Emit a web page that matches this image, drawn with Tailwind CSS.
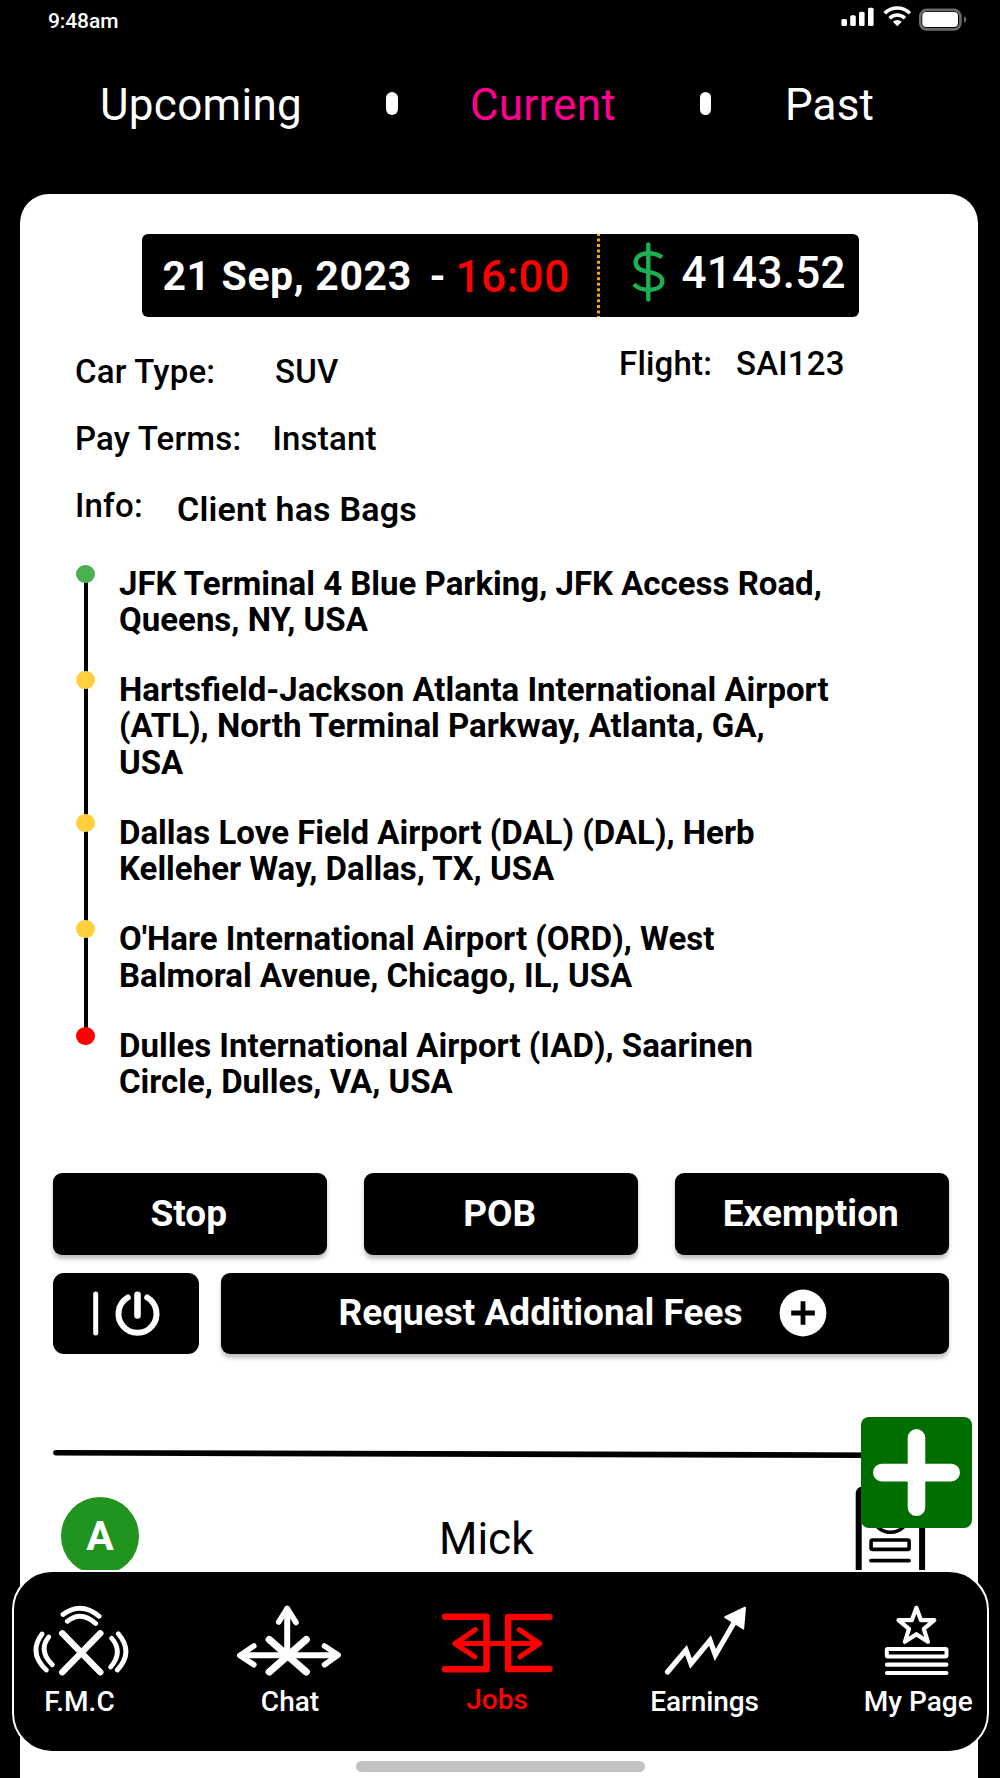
<!DOCTYPE html>
<html lang="en">
<head>
<meta charset="utf-8">
<title>Jobs</title>
<script src="https://cdn.jsdelivr.net/npm/@tailwindcss/browser@4"></script>
</head>
<body class="relative flex h-[1778px] w-[1000px] flex-col overflow-hidden bg-black font-['Roboto',sans-serif] whitespace-nowrap">

<!-- Status bar -->
<header class="flex h-[40px] shrink-0 justify-between pl-[48px] text-white">
  <span class="mt-[9px] text-[21px] leading-[24px] font-medium tracking-[-0.1px]">9:48am</span>
  <svg class="mr-[20px] h-[40px] w-[150px]" viewBox="830 0 150 40" fill="none">
    <g fill="#fff">
      <rect x="841.4" y="19" width="5.6" height="7" rx="1.5"/>
      <rect x="850.2" y="15.3" width="5.6" height="10.7" rx="1.5"/>
      <rect x="859" y="11.7" width="5.6" height="14.3" rx="1.5"/>
      <rect x="868" y="7.7" width="5.6" height="18.3" rx="1.5"/>
      <path d="M892.8 21.8Q897.3 18 901.8 21.8L897.3 26.3Z"/>
      <rect x="922.3" y="12" width="35.7" height="15" rx="4"/>
    </g>
    <path d="M884.7 13.3A17.5 17.5 0 0 1 909.9 13.3M889.7 18.3A10.6 10.6 0 0 1 904.9 18.3" stroke="#fff" stroke-width="3.5"/>
    <rect x="920.2" y="9.9" width="40.2" height="19.5" rx="6.5" stroke="#6b6b6b" stroke-width="2.6"/>
    <path d="M964 16.2C967 17.5 967 21.5 964 22.8Z" fill="#6b6b6b"/>
  </svg>
</header>

<!-- Tabs -->
<nav class="flex h-[154px] shrink-0 items-start pt-[39px] text-[44px] leading-[52px] text-white">
  <span class="ml-[100px] w-[286px] tracking-[0.3px]">Upcoming</span>
  <span class="mt-[13px] h-[23px] w-[12px] rounded-full bg-white"></span>
  <span class="ml-[72px] w-[230px] tracking-[0.2px] text-[#ff0090]">Current</span>
  <span class="mt-[13px] h-[23px] w-[11px] rounded-full bg-white"></span>
  <span class="ml-[74px] tracking-[0.1px]">Past</span>
</nav>

<!-- Job card -->
<main class="ml-[19.5px] flex w-[958px] grow flex-col rounded-t-[29px] bg-white text-black">

  <section class="mt-[39.5px] ml-[122px] flex h-[83px] w-[717px] shrink-0 items-start rounded-[6px] bg-black leading-[60px]">
    <span class="mt-[12px] ml-[21px] w-[267px] text-[41px] font-bold tracking-[0.6px] text-white">21 Sep, 2023</span>
    <span class="mt-[12px] w-[26px] text-[41px] font-bold text-white">-</span>
    <span class="mt-[13.5px] w-[141.5px] text-[44px] font-medium tracking-[0.5px] text-[#ff0000]">16:00</span>
    <svg class="h-[83px] w-[3px]" viewBox="0 0 3 83"><path d="M1.5 0V83" stroke="#f9a800" stroke-width="3" stroke-dasharray="3 2.53" stroke-dashoffset="1"/></svg>
    <svg class="ml-[28px] h-[83px] w-[50px]" viewBox="628 233.5 50 83" fill="none" stroke="#1db053" stroke-width="4.4">
      <path d="M648.3 243.9V299" stroke-linecap="round"/>
      <path d="M662 256.8C658 253.8 653.5 252.7 648.5 252.7C640.5 252.7 635.7 256.7 635.7 262C635.7 268 641 270 648.5 271.3C657 272.8 662.3 275.5 662.3 280.5C662.3 286.5 656.5 289.3 648.5 289.3C642.5 289.3 637.5 287.8 634 283.6"/>
    </svg>
    <span class="mt-[9.5px] ml-[3.5px] text-[44px] font-medium tracking-[0.3px] text-white">4143.52</span>
  </section>

  <section class="mt-[35px] ml-[55.5px] flex shrink-0 text-[33px] leading-[40px] font-medium tracking-[0.2px]">
    <dl class="w-[544px]">
      <div class="flex h-[67px]"><dt class="w-[200px]">Car Type:</dt><dd>SUV</dd></div>
      <div class="flex h-[67px]"><dt class="w-[197.5px]">Pay Terms:</dt><dd>Instant</dd></div>
      <div class="flex h-[67px]"><dt class="w-[102px]">Info:</dt><dd class="mt-[3.5px] text-[34px] font-semibold tracking-[0.2px]">Client has Bags</dd></div>
    </dl>
    <dl class="-mt-[8px] flex h-[40px]"><dt class="w-[117px]">Flight:</dt><dd>SAI123</dd></dl>
  </section>

  <!-- Route stops -->
  <ol class="mt-[12px] ml-[56.5px] h-[608px] shrink-0 text-[33px] leading-[36.5px] font-bold">
    <li class="relative flex gap-[24px] pb-[32.4px]">
      <span class="absolute top-[9px] left-[7.7px] h-full w-[4.6px] bg-black"></span>
      <span class="relative h-[18px] w-[19px] rounded-full bg-[#4caf50]"></span>
      <p class="pt-[1px]">JFK Terminal 4 Blue Parking, JFK Access Road,<br>Queens, NY, USA</p>
    </li>
    <li class="relative flex gap-[24px] pb-[32.4px]">
      <span class="absolute top-[9px] left-[7.7px] h-full w-[4.6px] bg-black"></span>
      <span class="relative h-[18px] w-[19px] rounded-full bg-[#ffd03c]"></span>
      <p class="pt-[1px]">Hartsfield-Jackson Atlanta International Airport<br>(ATL), North Terminal Parkway, Atlanta, GA,<br>USA</p>
    </li>
    <li class="relative flex gap-[24px] pb-[32.4px]">
      <span class="absolute top-[9px] left-[7.7px] h-full w-[4.6px] bg-black"></span>
      <span class="relative h-[18px] w-[19px] rounded-full bg-[#ffd03c]"></span>
      <p class="pt-[1px]">Dallas Love Field Airport (DAL) (DAL), Herb<br>Kelleher Way, Dallas, TX, USA</p>
    </li>
    <li class="relative flex gap-[24px] pb-[32.4px]">
      <span class="absolute top-[9px] left-[7.7px] h-full w-[4.6px] bg-black"></span>
      <span class="relative h-[18px] w-[19px] rounded-full bg-[#ffd03c]"></span>
      <p class="pt-[1px]">O'Hare International Airport (ORD), West<br>Balmoral Avenue, Chicago, IL, USA</p>
    </li>
    <li class="relative flex gap-[24px]">
      <span class="relative h-[18px] w-[19px] rounded-full bg-[#ff0000]"></span>
      <p class="pt-[1px]">Dulles International Airport (IAD), Saarinen<br>Circle, Dulles, VA, USA</p>
    </li>
  </ol>

  <!-- Actions -->
  <section class="mt-[0.5px] ml-[33px] flex w-[896.5px] shrink-0 flex-col gap-[18px] text-[37px] font-bold text-white">
    <div class="flex h-[81.5px] gap-[36.5px]">
      <button class="flex-1 rounded-[9px] bg-black pr-[2px] shadow-[0_4px_4px_rgba(0,0,0,0.25)]">Stop</button>
      <button class="flex-1 rounded-[9px] bg-black pr-[2px] shadow-[0_4px_4px_rgba(0,0,0,0.25)]">POB</button>
      <button class="flex-1 rounded-[9px] bg-black pr-[2px] shadow-[0_4px_4px_rgba(0,0,0,0.25)]">Exemption</button>
    </div>
    <div class="flex h-[81.5px] gap-[22.5px]">
      <button class="w-[146px] rounded-[11px] bg-black" aria-label="Power">
        <svg class="h-[81.5px] w-[146px]" viewBox="52 1272.5 146 81.5" fill="none" stroke="#fff" stroke-linecap="round">
          <path d="M94.7 1293.5V1332.5" stroke-width="5"/>
          <path d="M136.5 1294.3V1315" stroke-width="6.6"/>
          <path d="M126.8 1297A19 19 0 1 0 146.2 1297" stroke-width="6"/>
        </svg>
      </button>
      <button class="flex flex-1 items-center rounded-[9px] bg-black pl-[117.5px] shadow-[0_4px_4px_rgba(0,0,0,0.25)]">
        <span class="w-[440.5px] pb-[1px] text-left">Request Additional Fees</span>
        <svg class="h-[48px] w-[48px]" viewBox="-24 -24 48 48"><circle r="23.4" fill="#fff"/><path d="M-11.8 0H11.8M0 -11.8V11.8" stroke="#000" stroke-width="4.8"/></svg>
      </button>
    </div>
  </section>

  <!-- Contact -->
  <svg class="mt-[91.5px] ml-[30.5px] h-[14px] w-[840px] shrink-0" viewBox="50 1446 840 14"><path d="M56 1452.8L880 1455.2" stroke="#000" stroke-width="5.6" stroke-linecap="round"/></svg>
  <section class="mt-[37.5px] flex h-[80px] shrink-0 items-start">
    <span class="ml-[41.5px] flex h-[78px] w-[78px] items-center justify-center rounded-full bg-[#20941f] text-[41px] leading-[48px] font-bold text-white">A</span>
    <span class="mt-[15.5px] ml-[300px] w-[411px] text-[44px] leading-[52px]">Mick</span>
    <svg class="-mt-[13px] h-[100px] w-[80px]" viewBox="850 1484 80 100" fill="none" stroke="#000">
      <rect x="858.7" y="1489.5" width="63.4" height="110" rx="4" stroke-width="6"/>
      <circle cx="890.5" cy="1513.5" r="18.7" stroke-width="3.6"/>
      <rect x="871.1" y="1540" width="38" height="9.4" rx="1.5" stroke-width="3.6"/>
      <path d="M871 1560.6H909" stroke-width="3.8" stroke-linecap="round"/>
    </svg>
  </section>
</main>

<!-- Floating add button -->
<button class="absolute top-[1416.6px] left-[861px] h-[111.2px] w-[111.3px] rounded-[8px] bg-[#006f00]" aria-label="Add">
  <svg class="h-[111.2px] w-[111.3px]" viewBox="0 0 111.3 111.2"><path d="M20.8 55.6H90.2M55.5 20.9V90.3" stroke="#fff" stroke-width="17.6" stroke-linecap="round"/></svg>
</button>

<!-- Bottom navigation -->
<nav class="absolute top-[1570px] left-[11.5px] flex h-[182.5px] w-[977px] items-start rounded-[40px] border-[2.5px] border-white bg-black pt-[27.5px] pl-[6.5px] text-[28px] leading-[36px] font-medium text-white">
  <a class="flex w-[120px] flex-col items-center">
    <svg class="h-[84.5px] w-[120px]" viewBox="20 1600 120 84.5" fill="none" stroke="#fff" stroke-linecap="round">
      <path d="M62.3 1633.3L100.3 1672.3M100.3 1633.3L62.3 1672.3" stroke-width="6.4"/>
      <path d="M63 1614.5Q81 1601 99.2 1616.3M67.3 1621.3Q81 1610 95.7 1623.5M42 1634Q28 1653 46.3 1670M48.7 1637Q38 1650.5 52.3 1664.7M118.3 1633.7Q134 1652 117.3 1670M111.7 1638.3Q123.5 1652 110.7 1667" stroke-width="4.8"/>
    </svg>
    <span class="pr-[1px]">F.M.C</span>
  </a>
  <a class="ml-[89px] flex w-[120px] flex-col items-center">
    <svg class="h-[84.5px] w-[120px]" viewBox="229 1600 120 84.5" fill="none" stroke="#fff" stroke-linecap="round" stroke-linejoin="round">
      <path d="M287.2 1609V1653M241 1655.3H337" stroke-width="6"/>
      <path d="M278.7 1622L287.2 1608.5L296 1622.5M253.8 1646L239.8 1655.5L253.8 1664.7M324.5 1646L338.2 1655L324.5 1664.7" stroke-width="5.6"/>
      <path d="M269.2 1639.5L306.3 1672M306.3 1639.5L269.2 1672" stroke-width="7.2"/>
    </svg>
    <span class="pl-[2px]">Chat</span>
  </a>
  <a class="ml-[88px] flex w-[120px] flex-col items-center text-[#ff0000]">
    <svg class="h-[82px] w-[120px]" viewBox="437 1600 120 82" fill="none" stroke="#ff0000" stroke-linecap="round" stroke-linejoin="round">
      <path d="M445 1616.7H486.5V1669.3H445M549.3 1617H508V1669H549.3" stroke-width="6.5"/>
      <path d="M456 1643.5H539M475.3 1629.7L455 1643.7L474.7 1656.7M519.3 1629.7L539.6 1643.7L520 1656.7" stroke-width="5.2"/>
    </svg>
    <span>Jobs</span>
  </a>
  <a class="ml-[88px] flex w-[120px] flex-col items-center">
    <svg class="h-[84.5px] w-[120px]" viewBox="645 1600 120 84.5" fill="none" stroke="#fff" stroke-linecap="round" stroke-linejoin="round">
      <path d="M667.5 1672L686 1650L691 1663.5L710 1640.5L715.3 1655L735 1621" stroke-width="5.2" stroke-linejoin="miter"/>
      <path d="M745 1607.7L725.2 1617.2L743.2 1628.5Z" fill="#fff" stroke-width="2"/>
    </svg>
    <span class="pr-[1px] tracking-[-0.1px]">Earnings</span>
  </a>
  <a class="ml-[92px] flex w-[120px] flex-col items-center">
    <svg class="h-[84.5px] w-[120px]" viewBox="857 1600 120 84.5" fill="none" stroke="#fff" stroke-linecap="round" stroke-linejoin="round">
      <path d="M916.4 1607.8L921 1620.2H934.3L923.8 1628.8L927.9 1641.8L916.4 1634.2L904.9 1641.8L909 1628.8L898.5 1620.2H911.8Z" stroke-width="4.2"/>
      <rect x="886.8" y="1649" width="59.7" height="7.5" rx="1" stroke-width="4"/>
      <path d="M887 1664.7H946.4M887 1673H946.4" stroke-width="4.2"/>
    </svg>
    <span class="pl-[2.5px]">My Page</span>
  </a>
</nav>

<!-- Home indicator -->
<div class="absolute top-[1761px] left-[355.5px] h-[11px] w-[289px] rounded-full bg-[#c3c1c1]"></div>
</body>
</html>
